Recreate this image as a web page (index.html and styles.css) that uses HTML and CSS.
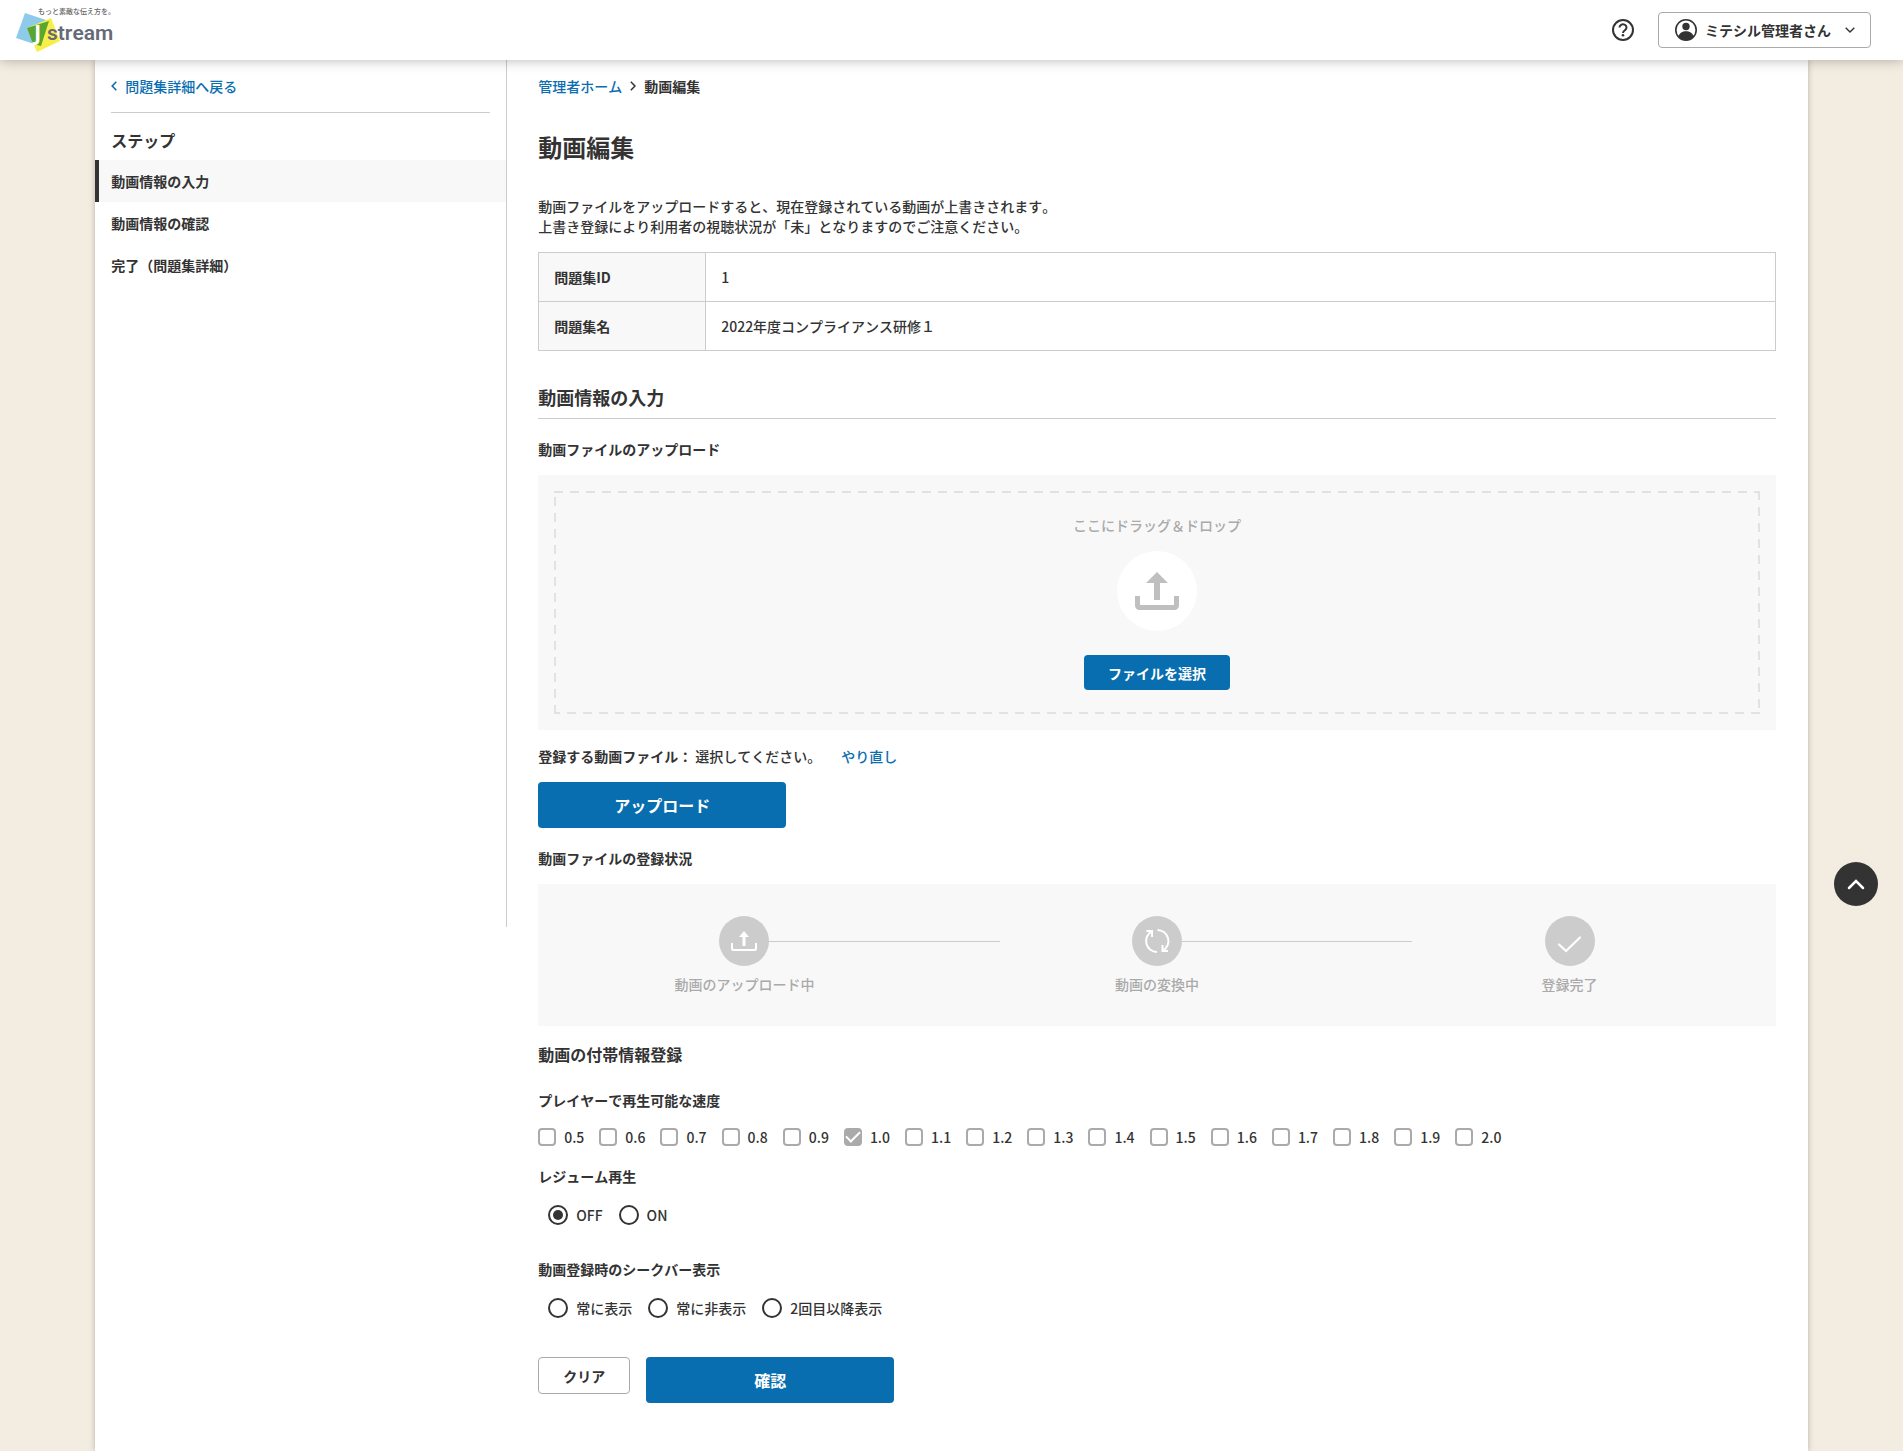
FILE: index.html
```html
<!DOCTYPE html>
<html lang="ja">
<head>
	<meta charset="UTF-8">
	<meta name="viewport" content="width=device-width, initial-scale=1">
	<title>動画編集</title>
	<link rel="stylesheet" href="styles.css">
</head>
<body>
	<header class="header">
		<a class="logo" href="#" aria-label="Jstream">
			<svg width="100" height="48" viewBox="0 0 100 48">
				<path d="M11 7 L35 15 L26 40 L2 32 Z" fill="#8ecbea"/>
				<path d="M37 12 L46 35 L23 46 L13 22 Z" fill="#f8ee4a"/>
				<path d="M35 15 L27 40 L19 38 L13 22 Z" fill="#5aa62f"/>
				<text class="logo_copy" x="24" y="8">もっと素敵な伝え方を。</text>
				<text class="logo_j" x="20" y="34">J</text>
				<text class="logo_text" x="33" y="34">stream</text>
			</svg>
		</a>
		<div class="header_menu">
			<a class="help" href="#" aria-label="ヘルプ">
				<svg width="22" height="22" viewBox="0 0 22 22" fill="none" stroke="#333" stroke-width="2">
					<circle cx="11" cy="11" r="10"/>
					<path d="M7.5 8.6a3.5 3.2 0 1 1 5.6 2.5c-1.3 1-2.1 1.5-2.1 2.9"/>
					<circle cx="11" cy="16.3" r="1.3" fill="#333" stroke="none"/>
				</svg>
			</a>
			<button class="user" type="button">
				<svg width="22" height="22" viewBox="0 0 22 22">
					<circle cx="11" cy="11" r="10.2" fill="#fff" stroke="#333" stroke-width="1.6"/>
					<circle cx="11" cy="7.5" r="3.7" fill="#333"/>
					<path d="M3.2 17.5C4.5 13.8 7.5 12.2 11 12.2s6.5 1.6 7.8 5.3A10.2 10.2 0 0 1 3.2 17.5z" fill="#333"/>
				</svg>
				<span>ミテシル管理者さん</span>
				<svg class="user_arrow" width="10" height="6" viewBox="0 0 10 6" fill="none" stroke="#333" stroke-width="1.4">
					<path d="M.7.7 5 5 9.3.7"/>
				</svg>
			</button>
		</div>
	</header>

	<div class="wrapper">
		<aside class="side">
			<div class="side_back">
				<a href="#">
					<svg width="6" height="10" viewBox="0 0 6 10" fill="none" stroke="#0a6eb0" stroke-width="1.6"><path d="M5.3.8 1.2 5l4.1 4.2"/></svg>
					問題集詳細へ戻る
				</a>
			</div>
			<p class="side_title">ステップ</p>
			<ul class="steps">
				<li class="current">動画情報の入力</li>
				<li>動画情報の確認</li>
				<li>完了（問題集詳細）</li>
			</ul>
		</aside>

		<main class="main">
			<nav class="breadcrumb">
				<a href="#">管理者ホーム</a>
				<svg width="6" height="10" viewBox="0 0 6 10" fill="none" stroke="#333" stroke-width="1.5"><path d="M.8.8 5 5 .8 9.2"/></svg>
				<span>動画編集</span>
			</nav>
			<h1>動画編集</h1>
			<p class="lead">動画ファイルをアップロードすると、現在登録されている動画が上書きされます。<br>上書き登録により利用者の視聴状況が「未」となりますのでご注意ください。</p>

			<table class="info">
				<tbody>
					<tr>
						<th scope="row">問題集ID</th>
						<td>1</td>
					</tr>
					<tr>
						<th scope="row">問題集名</th>
						<td>2022年度コンプライアンス研修１</td>
					</tr>
				</tbody>
			</table>

			<h2>動画情報の入力</h2>

			<h4>動画ファイルのアップロード</h4>
			<div class="upload">
				<div class="drop">
					<p>ここにドラッグ＆ドロップ</p>
					<svg class="drop_icon" width="80" height="80" viewBox="0 0 80 80">
						<circle cx="40" cy="40" r="40" fill="#fff"/>
						<path d="M40 21 51 32H43V49H37V32H29z" fill="#bfbfbf"/>
						<path d="M20.5 45V54.5a2 2 0 0 0 2 2H57.5a2 2 0 0 0 2-2V45" fill="none" stroke="#bfbfbf" stroke-width="5"/>
					</svg>
					<button class="btn btn_small" type="button">ファイルを選択</button>
				</div>
			</div>
			<p class="file"><b>登録する動画ファイル：</b><span>選択してください。</span><a href="#">やり直し</a></p>
			<button class="btn btn_large" type="button">アップロード</button>

			<h4 class="status_title">動画ファイルの登録状況</h4>
			<ol class="status">
				<li>
					<svg width="50" height="50" viewBox="0 0 50 50">
						<circle cx="25" cy="25" r="25" fill="#ccc"/>
						<path d="M25 15 30 21H26.5V30H23.5V21H20z" fill="#fff"/>
						<path d="M13 27v5.5a1.5 1.5 0 0 0 1.5 1.5h21a1.5 1.5 0 0 0 1.5-1.5V27" fill="none" stroke="#fff" stroke-width="2"/>
					</svg>
					<span>動画のアップロード中</span>
				</li>
				<li>
					<svg width="50" height="50" viewBox="0 0 50 50" fill="none" stroke="#fff" stroke-width="2">
						<circle cx="25" cy="25" r="25" fill="#ccc" stroke="none"/>
						<path d="M25 36A11 11 0 0 1 19.5 15.5M14.5 15H20V21"/>
						<path d="M25.5 14A11 11 0 0 1 31 34.5M36 35H30.5V29"/>
					</svg>
					<span>動画の変換中</span>
				</li>
				<li>
					<svg width="50" height="50" viewBox="0 0 50 50">
						<circle cx="25" cy="25" r="25" fill="#ccc"/>
						<path d="M14 28.5 21 35 35 21.5" fill="none" stroke="#fff" stroke-width="2.2" stroke-linecap="round"/>
					</svg>
					<span>登録完了</span>
				</li>
			</ol>

			<h3>動画の付帯情報登録</h3>

			<fieldset class="speed">
				<legend>プレイヤーで再生可能な速度</legend>
				<div class="options">
					<label><input type="checkbox">0.5</label>
					<label><input type="checkbox">0.6</label>
					<label><input type="checkbox">0.7</label>
					<label><input type="checkbox">0.8</label>
					<label><input type="checkbox">0.9</label>
					<label><input type="checkbox" checked disabled>1.0</label>
					<label><input type="checkbox">1.1</label>
					<label><input type="checkbox">1.2</label>
					<label><input type="checkbox">1.3</label>
					<label><input type="checkbox">1.4</label>
					<label><input type="checkbox">1.5</label>
					<label><input type="checkbox">1.6</label>
					<label><input type="checkbox">1.7</label>
					<label><input type="checkbox">1.8</label>
					<label><input type="checkbox">1.9</label>
					<label><input type="checkbox">2.0</label>
				</div>
			</fieldset>

			<fieldset class="choice">
				<legend>レジューム再生</legend>
				<div class="options">
					<label><input type="radio" name="resume" checked>OFF</label>
					<label><input type="radio" name="resume">ON</label>
				</div>
			</fieldset>

			<fieldset class="choice">
				<legend>動画登録時のシークバー表示</legend>
				<div class="options">
					<label><input type="radio" name="seekbar">常に表示</label>
					<label><input type="radio" name="seekbar">常に非表示</label>
					<label><input type="radio" name="seekbar">2回目以降表示</label>
				</div>
			</fieldset>

			<div class="buttons">
				<button class="btn_clear" type="reset">クリア</button>
				<button class="btn btn_large" type="submit">確認</button>
			</div>
		</main>
	</div>

	<a class="pagetop" href="#" aria-label="ページの先頭へ">
		<svg width="18" height="12" viewBox="0 0 18 12" fill="none" stroke="#fff" stroke-width="2.5" stroke-linecap="round"><path d="M2 10 9 3l7 7"/></svg>
	</a>
</body>
</html>
```
FILE: styles.css
```css
*{padding:0;margin:0;box-sizing:border-box;}
body{
	background:#f3ece1;
	color:#333;
	font-family:"Noto Sans CJK JP","Noto Sans",sans-serif;
	font-size:14px;
	font-weight:500;
	font-kerning:none;
	line-height:20px;
}
a{
	color:#0a6eb0;
	text-decoration:none;
}
ul, ol{
	list-style:none;
}
button, input{
	font:inherit;
	font-kerning:inherit;
	color:inherit;
}
svg{
	display:block;
	flex-shrink:0;
}

/* header */
.header{
	position:sticky;
	top:0;
	z-index:10;
	display:flex;
	justify-content:space-between;
	align-items:center;
	height:60px;
	padding:0 32px 0 14px;
	background:#fff;
	box-shadow:0 0 12px rgba(0,0,0,.3);
}
.logo_copy{
	font-size:7px;
	fill:#666;
}
.logo_j{
	font-family:"Open Sans",sans-serif;
	font-size:22px;
	font-weight:700;
	fill:#fff;
}
.logo_text{
	font-family:Roboto,sans-serif;
	font-size:21px;
	font-weight:600;
	fill:#666a78;
}
.header_menu{
	display:flex;
	align-items:center;
	gap:24px;
}
.user{
	display:flex;
	align-items:center;
	gap:8px;
	height:36px;
	padding:0 15px 0 16px;
	border:1px solid #aaa;
	border-radius:4px;
	background:#fff;
	font-weight:700;
	cursor:pointer;
}
.user_arrow{
	margin-left:6px;
}

.wrapper{
	display:flex;
	align-items:flex-start;
	width:90%;
	min-height:calc(100vh - 60px);
	margin:0 auto;
	background:#fff;
	box-shadow:0 0 6px rgba(0,0,0,.25);
}

/* side */
.side{
	width:calc(24% + 1px);
	min-height:867px;
	padding-top:16px;
	border-right:1px solid #ccc;
}
.side_back{
	margin:0 16px;
	padding-bottom:16px;
	border-bottom:1px solid #ccc;
}
.side_back a{
	display:flex;
	align-items:center;
	gap:8px;
}
.side_title{
	padding:15px 16px 8px;
	font-size:16px;
	line-height:24px;
	font-weight:700;
}
.steps li{
	padding:11px 12px;
	border-left:4px solid transparent;
	font-weight:700;
}
.steps .current{
	border-color:#333;
	background:#f8f8f8;
}

/* main */
.main{
	flex:1;
	padding:16px 32px 48px 31px;
}
.breadcrumb{
	display:flex;
	align-items:center;
	gap:8px;
	margin-bottom:33px;
}
.breadcrumb span{
	font-weight:700;
}
h1{
	margin-bottom:31px;
	font-size:24px;
	line-height:36px;
}
.lead{
	margin-bottom:16px;
}
.info{
	width:100%;
	margin-bottom:32px;
	border-collapse:collapse;
}
.info th, .info td{
	padding:14px 15px;
	border:1px solid #ccc;
	text-align:left;
	font-weight:500;
}
.info th{
	width:167px;
	background:#f8f8f8;
	font-weight:700;
}
h2{
	margin-bottom:20px;
	padding-bottom:7px;
	border-bottom:1px solid #ccc;
	font-size:18px;
	line-height:28px;
}
h4{
	margin-bottom:16px;
	font-size:14px;
	line-height:20px;
}
.upload{
	margin-bottom:16px;
	padding:16px;
	background:#f8f8f8;
}
/* dashed frame, one gradient for each side */
.drop{
	display:flex;
	flex-direction:column;
	align-items:center;
	padding:24px;
	background:
		linear-gradient(90deg,#e2e2e2 9px,transparent 9px) 0 0 / 16px 2px repeat-x,
		linear-gradient(90deg,#e2e2e2 9px,transparent 9px) -3px 100% / 16px 2px repeat-x,
		linear-gradient(#e2e2e2 9px,transparent 9px) 0 6px / 2px 16px repeat-y,
		linear-gradient(#e2e2e2 9px,transparent 9px) 100% 0 / 2px 16px repeat-y;
}
.drop p{
	color:#aaa;
}
.drop_icon{
	margin:16px 0 24px;
}
.btn{
	border:0;
	border-radius:4px;
	background:#086eaf;
	color:#fff;
	font-weight:700;
	cursor:pointer;
}
.btn_small{
	height:35px;
	padding:0 24px;
}
.btn_large{
	width:248px;
	height:46px;
	font-size:16px;
}
.file{
	margin-bottom:16px;
}
.file span{
	margin:0 20px 0 3px;
}
.status_title{
	margin-top:20px;
}
.status{
	display:flex;
	margin-bottom:16px;
	padding:32px 0;
	background:#f8f8f8;
}
.status li{
	position:relative;
	display:flex;
	flex:1;
	flex-direction:column;
	align-items:center;
	gap:8px;
	color:#aaa;
}
/* line to the next step */
.status li:not(:last-child)::after{
	content:"";
	position:absolute;
	top:25px;
	left:calc(50% + 25px);
	width:calc(50% + 24px);
	border-top:1px solid #ccc;
}
h3{
	margin-bottom:24px;
	font-size:16px;
	line-height:24px;
}
fieldset{
	border:0;
}
legend{
	font-weight:700;
}
.options{
	display:flex;
	flex-wrap:wrap;
	gap:16px;
}
.options label{
	display:flex;
	align-items:center;
	gap:8px;
}
.speed{
	margin-bottom:19px;
}
.speed .options{
	gap:15px;
	padding-top:17px;
}
.choice{
	margin-bottom:34px;
}
.choice .options{
	padding:19px 10px 0;
}
input[type="checkbox"]{
	appearance:none;
	display:grid;
	place-items:center;
	width:18px;
	height:18px;
	border:2px solid #aaa;
	border-radius:4px;
}
input[type="checkbox"]:checked{
	background:#aaa;
}
input[type="checkbox"]:checked::before{
	content:"";
	width:12px;
	height:6px;
	border:solid #fff;
	border-width:0 0 2px 2px;
	transform:translateY(-2px) rotate(-45deg);
}
input[type="radio"]{
	appearance:none;
	display:grid;
	place-items:center;
	width:20px;
	height:20px;
	border:2px solid #333;
	border-radius:50%;
}
input[type="radio"]:checked::before{
	content:"";
	width:10px;
	height:10px;
	border-radius:50%;
	background:#333;
}
.buttons{
	display:flex;
	align-items:flex-start;
	gap:16px;
	margin-top:39px;
}
.btn_clear{
	width:92px;
	height:37px;
	border:1px solid #aaa;
	border-radius:4px;
	background:#fff;
	font-weight:700;
	cursor:pointer;
}

.pagetop{
	position:fixed;
	top:862px;
	right:25px;
	display:grid;
	place-items:center;
	width:44px;
	height:44px;
	border-radius:50%;
	background:#333;
}
```
